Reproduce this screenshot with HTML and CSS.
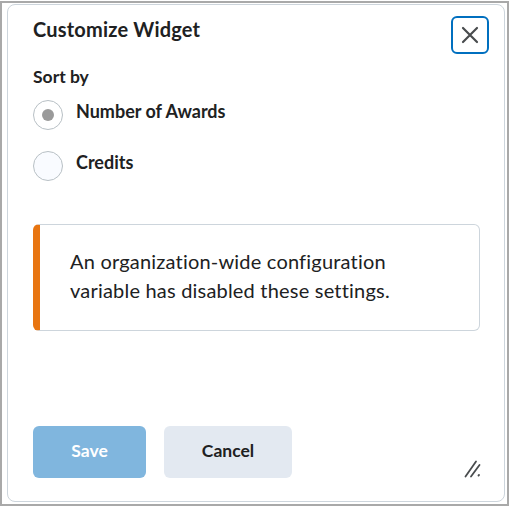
FILE: index.html
```html
<!DOCTYPE html>
<html lang="en">
<head>
<meta charset="utf-8">
<title>Customize Widget</title>
<link rel="stylesheet" href="styles.css">
</head>
<body>
<div class="frame">
  <div class="dialog" role="dialog" aria-labelledby="dlg-title">
    <div class="dialog-header">
      <h2 class="dialog-title" id="dlg-title">Customize Widget</h2>
      <button class="close-btn" aria-label="Close">
        <svg width="18" height="18" viewBox="0 0 18 18" aria-hidden="true">
          <path d="M2 2 L16 16 M16 2 L2 16" stroke="#494c4e" stroke-width="2.2" stroke-linecap="round" fill="none"/>
        </svg>
      </button>
    </div>
    <div class="dialog-body">
      <div class="field-label">Sort by</div>
      <div class="radio-row">
        <span class="radio radio-checked"><span class="radio-dot"></span></span>
        <span class="radio-label">Number of Awards</span>
      </div>
      <div class="radio-row">
        <span class="radio"></span>
        <span class="radio-label">Credits</span>
      </div>
      <div class="alert">
        <p class="alert-text">An organization-wide configuration variable has disabled these settings.</p>
      </div>
    </div>
    <div class="dialog-footer">
      <button class="btn btn-primary" disabled>Save</button>
      <button class="btn btn-secondary">Cancel</button>
      <span class="grip" aria-hidden="true">
        <svg width="18" height="18" viewBox="0 0 18 18">
          <path d="M1.5 16.5 L12 1.5 M7 16.5 L15.5 5 M14.5 15.5 L15 15" stroke="#494c4e" stroke-width="1.8" stroke-linecap="round" fill="none"/>
        </svg>
      </span>
    </div>
  </div>
</div>
</body>
</html>
```
FILE: styles.css
```css
* { box-sizing: border-box; }
html, body { margin: 0; padding: 0; background: #ffffff; }
body {
  font-family: Lato, "Noto Sans", "Liberation Sans", sans-serif;
  color: #202122;
  width: 511px;
  height: 507px;
  overflow: hidden;
}
.frame {
  margin-top: 1px;
  width: 509px;
  height: 505px;
  border: 2px solid #a9a9a9;
  padding: 1px 2px 2px 5px;
  display: flex;
}
.dialog {
  flex: 1;
  background: #ffffff;
  border: 1px solid #cdd5dc;
  border-radius: 8px;
  display: flex;
  flex-direction: column;
}
.dialog-header {
  display: flex;
  justify-content: space-between;
  align-items: flex-start;
  padding: 11px 15px 0 25px;
}
.dialog-title {
  margin: 2px 0 0 0;
  font-size: 20px;
  letter-spacing: 0.2px;
  font-weight: 700;
  line-height: 23px;
  color: #202122;
}
.close-btn {
  width: 38px;
  height: 38px;
  border: 2px solid #006fbf;
  border-radius: 6px;
  background: #ffffff;
  padding: 0;
  display: flex;
  align-items: center;
  justify-content: center;
}
.dialog-body {
  padding: 0 24px 0 25px;
  display: flex;
  flex-direction: column;
}
.field-label {
  margin-top: 13px;
  font-size: 17.5px;
  font-weight: 700;
  line-height: 20px;
}
.radio-row {
  display: flex;
  align-items: flex-start;
  gap: 13px;
  margin-top: 13px;
  height: 38px;
}
.radio-row + .radio-row { margin-top: 13px; }
.radio {
  width: 30px;
  height: 30px;
  border: 1px solid #b8c0c5;
  border-radius: 50%;
  background: #f9fbff;
  display: flex;
  align-items: center;
  justify-content: center;
  flex: none;
}
.radio-checked { background: #ffffff; }
.radio-dot {
  width: 12px;
  height: 12px;
  border-radius: 50%;
  background: #9a9a9a;
}
.radio-label {
  font-size: 18px;
  font-weight: 700;
  line-height: 22px;
  margin-top: 0;
}
.alert {
  margin-top: 35px;
  height: 107px;
  border: 1px solid #cdd5dc;
  border-left: 7px solid #e87511;
  border-radius: 6px;
  padding: 22px 30px 0 30px;
}
.alert-text {
  margin: 0;
  font-size: 20px;
  letter-spacing: 0.2px;
  line-height: 29px;
  font-weight: 400;
  color: #202122;
}
.dialog-footer {
  margin-top: auto;
  display: flex;
  align-items: center;
  gap: 18px;
  padding: 0 0 23px 25px;
  position: relative;
}
.btn {
  height: 52px;
  border: none;
  border-radius: 6px;
  font-family: Lato, "Noto Sans", "Liberation Sans", sans-serif;
  font-size: 17.5px;
  font-weight: 700;
  padding: 0 0 3px 0;
}
.btn-primary {
  width: 113px;
  background: #80b6de;
  color: #ffffff;
}
.btn-secondary {
  width: 128px;
  background: #e3e9f1;
  color: #202122;
}
.grip {
  position: absolute;
  right: 22px;
  bottom: 23px;
  width: 18px;
  height: 18px;
}
```
